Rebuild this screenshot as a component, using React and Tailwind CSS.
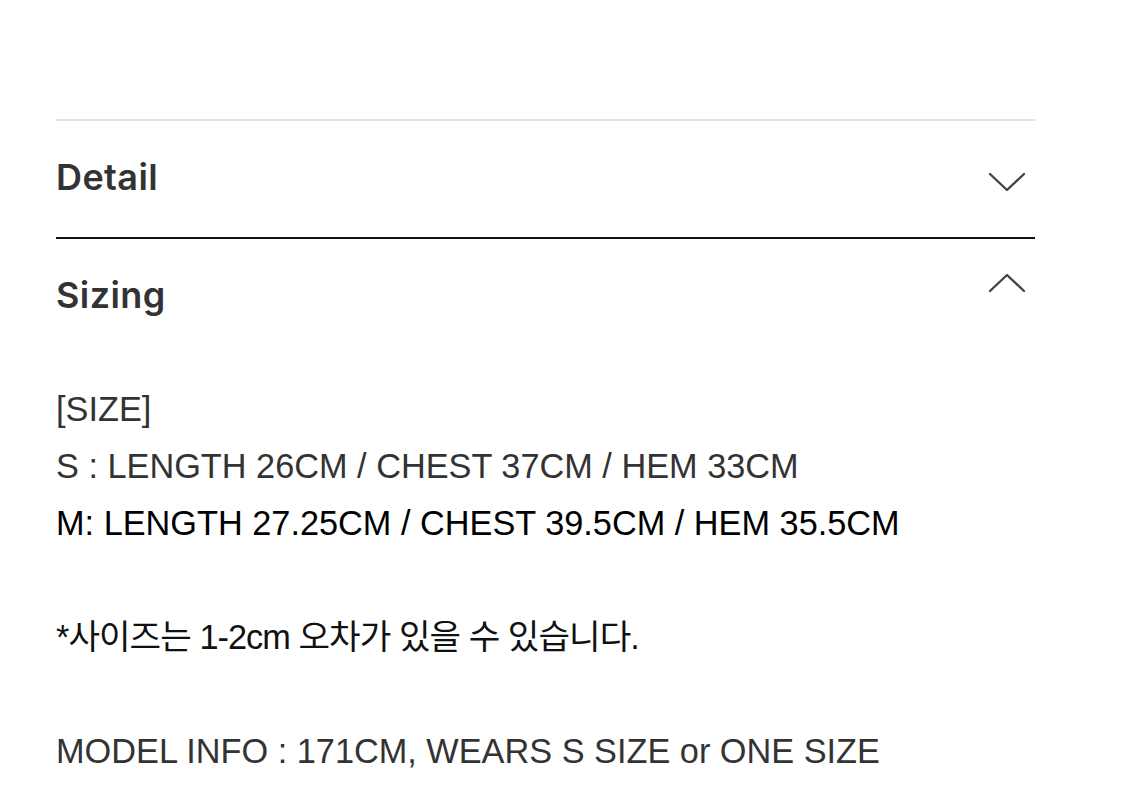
import { useState } from 'react';

const Chevron = ({ up }) => (
    <svg width="38" height="20" viewBox="0 0 38 20" fill="none" stroke="#444" strokeWidth="2.4" strokeLinecap="round" strokeLinejoin="round">
        {up ? <path d="M2 18 L19 2 L36 18" /> : <path d="M2 2 L19 18 L36 2" />}
    </svg>
);

const sizeLines = [
    { text: '[SIZE]', cls: 'text-[#333]' },
    { text: 'S : LENGTH 26CM / CHEST 37CM / HEM 33CM', cls: 'text-[#333]' },
    { text: 'M: LENGTH 27.25CM / CHEST 39.5CM / HEM 35.5CM', cls: 'text-black' },
    { text: '', cls: '' },
    { text: '*사이즈는 1-2cm 오차가 있을 수 있습니다.', cls: 'text-[#111] tracking-[-0.95px]' },
    { text: '', cls: '' },
    { text: 'MODEL INFO : 171CM, WEARS S SIZE or ONE SIZE', cls: 'text-[#333]' },
];

const App = () => {
    const [open, setOpen] = useState('sizing');

    return (
        <div className="min-h-screen bg-white pt-[119px] pl-[56px]">
            <div className="w-[979px]">
                {/* Detail */}
                <div className="border-t-2 border-[#e2e2e2] border-b-2 border-b-[#111]">
                    <button
                        type="button"
                        onClick={() => setOpen(open === 'detail' ? '' : 'detail')}
                        className="w-full h-[116px] flex items-center justify-between pr-[9px]"
                    >
                        <span className="text-[36px] font-semibold text-[#333] tracking-[0.4px] -mt-[4px]" style={{ fontFamily: 'Inter, sans-serif' }}>Detail</span>
                        <span className="mt-[6px]"><Chevron /></span>
                    </button>
                </div>

                {/* Sizing */}
                <div>
                    <button
                        type="button"
                        onClick={() => setOpen(open === 'sizing' ? '' : 'sizing')}
                        className="w-full h-[112px] flex items-center justify-between pr-[9px]"
                    >
                        <span className="text-[36px] font-semibold text-[#333] tracking-[0.4px]" style={{ fontFamily: 'Inter, sans-serif' }}>Sizing</span>
                        <span className="-mt-[24px]"><Chevron up /></span>
                    </button>
                    <div className="pt-[30px] text-[34.3px] leading-[57px]" style={{ fontFamily: '"Liberation Sans", "Noto Sans CJK KR", sans-serif' }}>
                        {sizeLines.map((l, i) => (
                            <p key={i} className={`h-[57px] whitespace-nowrap ${l.cls}`}>{l.text}</p>
                        ))}
                    </div>
                </div>
            </div>
        </div>
    );
};

export default App;
